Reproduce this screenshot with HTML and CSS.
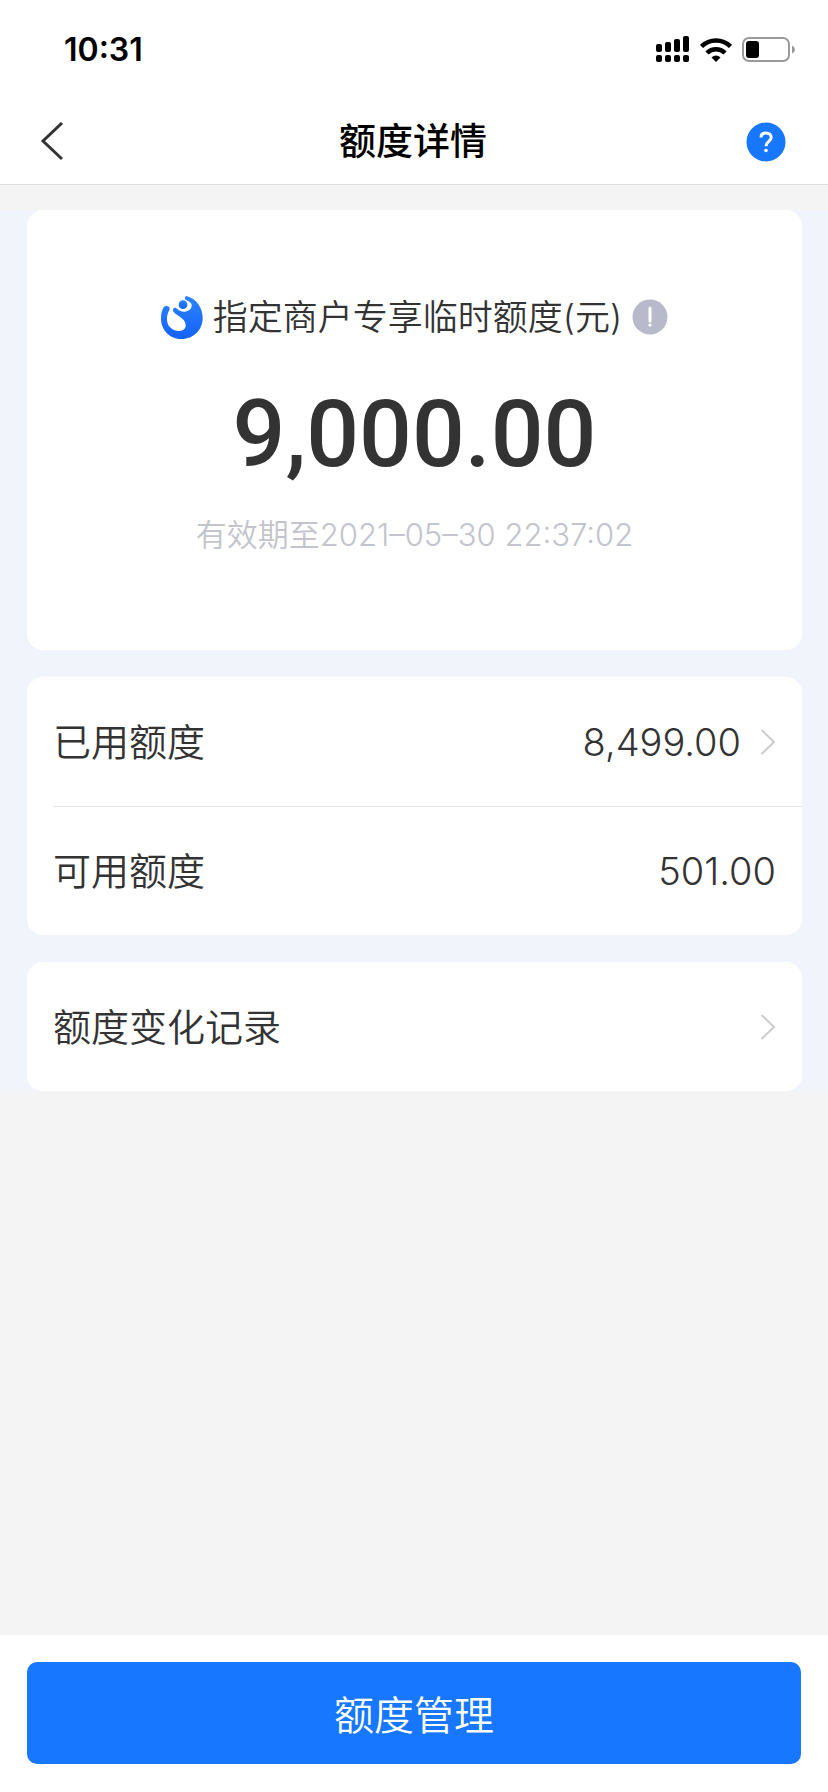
FILE: index.html
```html
<!doctype html>
<html lang="zh-CN">
<head>
    <meta charset="utf-8">
    <meta name="viewport" content="width=device-width,initial-scale=1">
    <title>额度详情</title>
    <link rel="stylesheet" href="styles.css">
</head>
<body>
    <header class="header">
        <div class="status_bar">
            <span class="time">10:31</span>
            <div class="status_icons">
                <svg width="34" height="27" viewBox="0 0 34 27">
                    <rect x="0" y="8" width="6" height="8" rx="2"/>
                    <rect x="9" y="6" width="6" height="10" rx="2"/>
                    <rect x="18" y="3" width="6" height="13" rx="2"/>
                    <rect x="27" y="0" width="6" height="16" rx="2"/>
                    <rect x="0" y="19" width="6" height="7" rx="2"/>
                    <rect x="9" y="19" width="6" height="7" rx="2"/>
                    <rect x="18" y="19" width="6" height="7" rx="2"/>
                    <rect x="27" y="19" width="6" height="7" rx="2"/>
                </svg>
                <svg width="32" height="24" viewBox="0 0 32 24" fill="none" stroke="#000" stroke-width="4.500">
                    <path d="M1.500 8.500a20.500 20.500 0 0 1 29 0"/>
                    <path d="M7 15a12.700 12.700 0 0 1 18 0"/>
                    <path d="M16 24l-4.500-4.600a6.500 6.500 0 0 1 9 0z" fill="#000" stroke="none"/>
                </svg>
                <svg width="54" height="26" viewBox="0 0 54 26">
                    <rect x="1" y="1" width="46" height="23" rx="6" fill="none" stroke="#999" stroke-width="2"/>
                    <rect x="4" y="4" width="13" height="17" rx="3"/>
                    <path d="M50 8.500q3 1.500 3 4t-3 4z" fill="#999"/>
                </svg>
            </div>
        </div>
        <nav class="nav">
            <button class="nav_button" type="button" aria-label="返回">
                <svg width="24" height="40" viewBox="0 0 24 40" fill="none" stroke="#333" stroke-width="3">
                    <path d="M22 1L3 19l19 18"/>
                </svg>
            </button>
            <h1 class="title">额度详情</h1>
            <button class="nav_button" type="button" aria-label="帮助">
                <svg width="40" height="40" viewBox="0 0 40 40">
                    <circle cx="20" cy="20" r="19.500" fill="#1777ff"/>
                    <path d="M15 15.500c0-3 2-4.600 5-4.600s5.200 1.800 5.200 4.600c0 4-5.200 4-5.200 8.800" fill="none" stroke="#fff" stroke-width="3"/>
                    <circle cx="20" cy="28.500" r="1.800" fill="#fff"/>
                </svg>
            </button>
        </nav>
    </header>

    <main class="content">
        <section class="card summary">
            <div class="summary_label">
                <svg width="42" height="43" viewBox="0 0 126 129">
                    <defs>
                        <linearGradient id="logo_blue" x1="0" y1="0" x2="0" y2="1">
                            <stop offset="0" stop-color="#2b84ff"/>
                            <stop offset="1" stop-color="#1462f8"/>
                        </linearGradient>
                    </defs>
                    <path fill="url(#logo_blue)" d="M78 1C105 8 125 34 125 66c0 36-28 63-63 63S0 102 0 68C0 52 3 42 8 34c6-8 20-4 18 6-1 4-8 12-8 29 0 20 13 35 36 36 14 0 21-8 20-19-2-14-12-19-24-28-8-6-14-10-14-16 0-6 6-8 10-5 8 7 16 11 26 10 16-2 24-14 18-25-5-8-18-7-18-15 0-5 3-8 8-6z"/>
                    <circle cx="66" cy="26" r="13" fill="url(#logo_blue)"/>
                </svg>
                <span>指定商户专享临时额度(元)</span>
                <button class="info_button" type="button" aria-label="说明">
                    <svg width="36" height="36" viewBox="0 0 36 36">
                        <circle cx="18" cy="18" r="17.500" fill="#b9b9cc"/>
                        <path d="M18 9v13" stroke="#fff" stroke-width="3" stroke-linecap="round"/>
                        <circle cx="18" cy="26" r="1.600" fill="#fff"/>
                    </svg>
                </button>
            </div>
            <div class="amount">9,000.00</div>
            <div class="expire">有效期至2021–05–30 22:37:02</div>
        </section>

        <section class="card">
            <a class="row" href="#">
                <span>已用额度</span>
                <span class="value">8,499.00</span>
                <svg class="arrow" width="16" height="28" viewBox="0 0 16 28"><path d="M1.500 2L14 14 1.500 26"/></svg>
            </a>
            <div class="row">
                <span>可用额度</span>
                <span class="value">501.00</span>
            </div>
        </section>

        <section class="card">
            <a class="row" href="#">
                <span>额度变化记录</span>
                <svg class="arrow" width="16" height="28" viewBox="0 0 16 28"><path d="M1.500 2L14 14 1.500 26"/></svg>
            </a>
        </section>
    </main>

    <footer class="footer">
        <button class="manage_button" type="button">额度管理</button>
    </footer>
</body>
</html>
```

FILE: styles.css
```css
*{
    box-sizing: border-box;
}
body{
    display: flex;
    flex-direction: column;
    min-height: 100vh;
    margin: 0;
    background-color: #f4f4f4;
    color: #333;
    font-family: Inter, "Noto Sans CJK SC", sans-serif;
    font-weight: 350;
}
button{
    border: none;
    padding: 0;
    background: none;
    font-family: inherit;
    font-weight: inherit;
    cursor: pointer;
}
svg{
    display: block;
    flex: none;
}
.header{
    background-color: #fff;
    border-bottom: 1px #ddd solid;
}
.status_bar{
    display: flex;
    justify-content: space-between;
    align-items: center;
    height: 99px;
    padding: 0 32px 0 64px;
}
.time{
    color: #000;
    font-size: 32px;
    font-weight: 600;
}
.status_icons{
    display: flex;
    align-items: center;
    gap: 10px;
}
.nav{
    display: flex;
    justify-content: space-between;
    align-items: center;
    height: 85px;
    padding: 0 42px 0 40px;
}
.nav_button{
    display: flex;
    width: 40px;
}
.title{
    margin: 0;
    color: #000;
    font-size: 37px;
    font-weight: 500;
    line-height: 48px;
}
.content{
    display: flex;
    flex-direction: column;
    gap: 27px;
    margin-top: 25px;
    padding: 0 26px 0 27px;
    background-color: #f1f4fa;
}
.card{
    border-radius: 16px;
    background-color: #fff;
}
.summary{
    padding: 82px 0 93px;
    text-align: center;
}
.summary_label{
    display: flex;
    justify-content: center;
    align-items: center;
    gap: 10px;
    font-size: 35px;
    line-height: 50px;
}
.amount{
    margin: 43px 0 28px;
    font-family: Roboto, sans-serif;
    font-size: 93px;
    font-weight: 500;
    line-height: 100px;
}
.expire{
    color: #c3c4cc;
    font-size: 31px;
    line-height: 44px;
}
.row{
    display: flex;
    align-items: center;
    gap: 19px;
    height: 129px;
    margin-left: 26px;
    padding-right: 26px;
    color: #333;
    font-size: 38px;
    line-height: 54px;
    text-decoration: none;
}
.row + .row{
    border-top: 1px #e8e8e8 solid;
}
.value{
    margin-left: auto;
}
.arrow{
    margin-left: auto;
    fill: none;
    stroke: #ccc;
    stroke-width: 2;
}
.value + .arrow{
    margin-left: 0;
}
.footer{
    margin-top: auto;
    padding: 27px 27px 28px;
    background-color: #fff;
}
.manage_button{
    display: block;
    width: 100%;
    height: 102px;
    border-radius: 10px;
    background-color: #1777ff;
    color: #fff;
    font-size: 40px;
}
```
